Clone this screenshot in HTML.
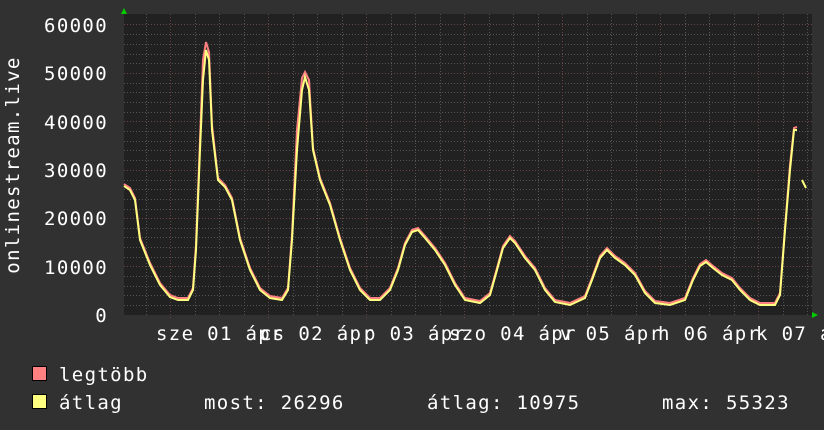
<!DOCTYPE html><html><head><style>body{margin:0;background:#313131}svg{display:block}text{font-family:"DejaVu Sans Mono","Liberation Mono",monospace;font-size:19px;fill:#fff;letter-spacing:1.35px}</style></head><body>
<svg width="824" height="430" xmlns="http://www.w3.org/2000/svg">
<rect width="824" height="430" fill="#313131"/>
<rect x="124" y="14" width="688" height="301" fill="#212121"/>
<g stroke="#555" stroke-width="1" stroke-dasharray="1,2">
<path d="M124 305.5H812M124 295.5H812M124 286.5H812M124 276.5H812M124 257.5H812M124 247.5H812M124 237.5H812M124 228.5H812M124 209.5H812M124 199.5H812M124 189.5H812M124 180.5H812M124 160.5H812M124 150.5H812M124 141.5H812M124 131.5H812M124 112.5H812M124 102.5H812M124 92.5H812M124 83.5H812M124 63.5H812M124 54.5H812M124 44.5H812M124 34.5H812"/>
<path d="M146.5 14V315M195.5 14V315M219.5 14V315M244.5 14V315M293.5 14V315M317.5 14V315M342.5 14V315M391.5 14V315M415.5 14V315M440.5 14V315M489.5 14V315M513.5 14V315M538.5 14V315M587.5 14V315M611.5 14V315M636.5 14V315M685.5 14V315M709.5 14V315M734.5 14V315M783.5 14V315M807.5 14V315"/>
</g>
<g stroke="#6a4444" stroke-width="1" stroke-dasharray="1,2">
<path d="M124 266.5H812M124 218.5H812M124 170.5H812M124 121.5H812M124 73.5H812M124 24.5H812"/>
<path d="M170.5 14V318M268.5 14V318M366.5 14V318M464.5 14V318M562.5 14V318M660.5 14V318M758.5 14V318"/>
</g>
<polyline fill="none" stroke="#ff8080" stroke-width="2" points="124,184 130,188 135,198 140,238 150,263 160,283 170,295 178,298 188,298 193,288 196,245 200,140 203,60 206,42 209,52 212,125 218,178 225,185 232,198 240,238 250,268 260,288 270,296 282,298 288,288 292,235 297,130 302,78 305,72 309,80 313,148 320,178 330,203 340,238 350,268 360,288 370,298 380,298 390,288 398,268 405,243 412,230 418,228 425,236 435,248 445,263 455,283 465,298 480,301 490,293 497,268 503,246 510,236 515,241 525,256 535,268 545,288 555,300 570,303 585,296 592,278 600,256 607,248 615,256 625,263 635,273 645,291 655,301 670,303 685,298 693,278 700,264 706,260 713,266 722,273 732,278 740,288 750,298 760,303 775,303 780,293 785,228 790,165 794,128 797,127"/>
<polyline fill="none" stroke="#ffff80" stroke-width="2" points="124,186 130,190 135,200 140,240 150,265 160,285 170,297 178,300 188,300 193,290 196,250 200,150 203,80 206,50 209,60 212,130 218,180 225,187 232,200 240,240 250,270 260,290 270,298 282,300 288,290 292,240 297,150 302,90 305,77 309,90 313,150 320,180 330,205 340,240 350,270 360,290 370,300 380,300 390,290 398,270 405,245 412,232 418,230 425,238 435,250 445,265 455,285 465,300 480,303 490,295 497,270 503,248 510,238 515,243 525,258 535,270 545,290 555,302 570,305 585,298 592,280 600,258 607,250 615,258 625,265 635,275 645,293 655,303 670,305 685,300 693,280 700,266 706,262 713,268 722,275 732,280 740,290 750,300 760,305 775,305 780,295 785,230 790,170 794,130 797,130"/>
<polyline fill="none" stroke="#ffff80" stroke-width="2" points="802,180 806,188"/>
<polygon points="121,14 127,14 124,8" fill="#00cc00"/>
<polygon points="812,312 812,318 818,315" fill="#00cc00"/>
<g text-anchor="end">
<text x="108" y="32">60000</text><text x="108" y="80">50000</text><text x="108" y="129">40000</text><text x="108" y="177">30000</text><text x="108" y="225">20000</text><text x="108" y="274">10000</text><text x="108" y="322">0</text>
</g>
<text transform="translate(19,165) rotate(-90)" text-anchor="middle">onlinestream.live</text>
<text x="156" y="340">sze 01 ápr</text>
<text x="260" y="340">cs 02 ápr</text>
<text x="364" y="340">p 03 ápr</text>
<text x="449" y="340">szo 04 ápr</text>
<text x="560" y="340">v 05 ápr</text>
<text x="658" y="340">h 06 ápr</text>
<text x="756" y="340">k 07 ápr</text>
<rect x="32.5" y="366.5" width="14" height="14" fill="#ff8080" stroke="#000"/>
<rect x="32.5" y="394.5" width="14" height="14" fill="#ffff80" stroke="#000"/>
<text x="59" y="381">legtöbb</text>
<text x="59" y="409">átlag</text>
<text x="204" y="409">most: 26296</text>
<text x="427" y="409">átlag: 10975</text>
<text x="662" y="409">max: 55323</text>
</svg>
</body></html>
